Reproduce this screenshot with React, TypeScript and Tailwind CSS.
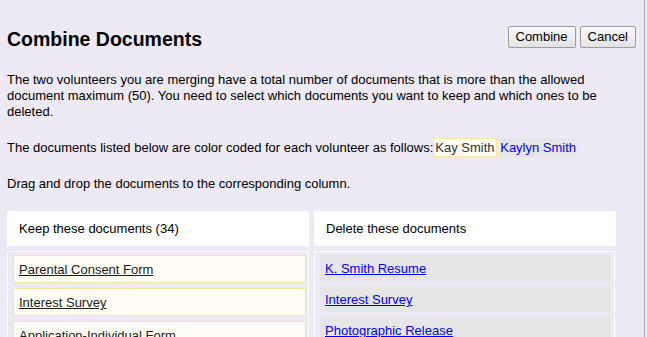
import React from "react";

const keep = ["Parental Consent Form", "Interest Survey", "Application-Individual Form", "Photographic Release"];
const del = ["K. Smith Resume", "Interest Survey", "Photographic Release", "Parental Consent Form"];

export default function App() {
  return (
    <div
      className="h-[337px] w-[647px] overflow-hidden bg-[#EDEAF5] text-black flex"
      style={{ fontFamily: '"Liberation Sans", Arial, sans-serif' }}
    >
      <div className="w-[645px] shrink-0 border-r border-[#A8A8B0] pl-[7px] pr-[8px]">
        <div className="flex justify-between items-start pt-[26px]">
          <h1 className="mt-[2px] text-[19.5px] leading-[23px] font-bold">Combine Documents</h1>
          <div className="flex gap-[4px]">
            <button className="h-[22px] px-[7px] border border-[#9C9C9C] rounded-[2px] bg-gradient-to-b from-[#FAFAFA] to-[#E2E2E2] text-[13px] leading-[18px] text-black">
              Combine
            </button>
            <button className="h-[22px] px-[7px] border border-[#9C9C9C] rounded-[2px] bg-gradient-to-b from-[#FAFAFA] to-[#E2E2E2] text-[13px] leading-[18px] text-black">
              Cancel
            </button>
          </div>
        </div>
        <p className="mt-[21px] text-[13px] leading-[16px]">
          The two volunteers you are merging have a total number of documents that is more than the allowed document maximum (50). You need to select which documents you want to keep and which ones to be deleted.
        </p>
        <p className="mt-[20px] text-[13px] leading-[16px]">
          The documents listed below are color coded for each volunteer as follows:
          <span className="border border-[#FCE59A] bg-[#FFFCF2] px-[1px] py-[1px] text-[#333]">Kay Smith</span>{" "}
          <span className="bg-[#E6E6E6] py-[2px] text-[#0000FF]">Kaylyn Smith</span>
        </p>
        <p className="mt-[20px] text-[13px] leading-[16px]">Drag and drop the documents to the corresponding column.</p>
        <div className="mt-[19px] flex gap-[5px] text-[13px] leading-[16px]">
          <div className="w-[302px] shrink-0">
            <div className="h-[35px] bg-white pl-[12px] pt-[10px]">Keep these documents (34)</div>
            <div className="mt-[5px] border border-white pl-[5px] pr-[2px] pt-[3px] flex flex-col gap-[5px]">
              {keep.map((d, i) => (
                <div key={i} className="h-[28px] border border-[#FCE59A] bg-[#FFFCF3] pl-[5px] pt-[6px]">
                  <span className="underline text-[#222]">{d}</span>
                </div>
              ))}
            </div>
          </div>
          <div className="w-[302px] shrink-0">
            <div className="h-[35px] bg-white pl-[12px] pt-[10px]">Delete these documents</div>
            <div className="mt-[5px] w-[301px] border border-white pl-[5px] pr-[3px] pt-[3px] flex flex-col gap-[5px]">
              {del.map((d, i) => (
                <div key={i} className="h-[26px] bg-[#E6E6E6] pl-[5px] pt-[6px]">
                  <span className="underline text-[#0000FF]">{d}</span>
                </div>
              ))}
            </div>
          </div>
        </div>
      </div>
    </div>
  );
}
